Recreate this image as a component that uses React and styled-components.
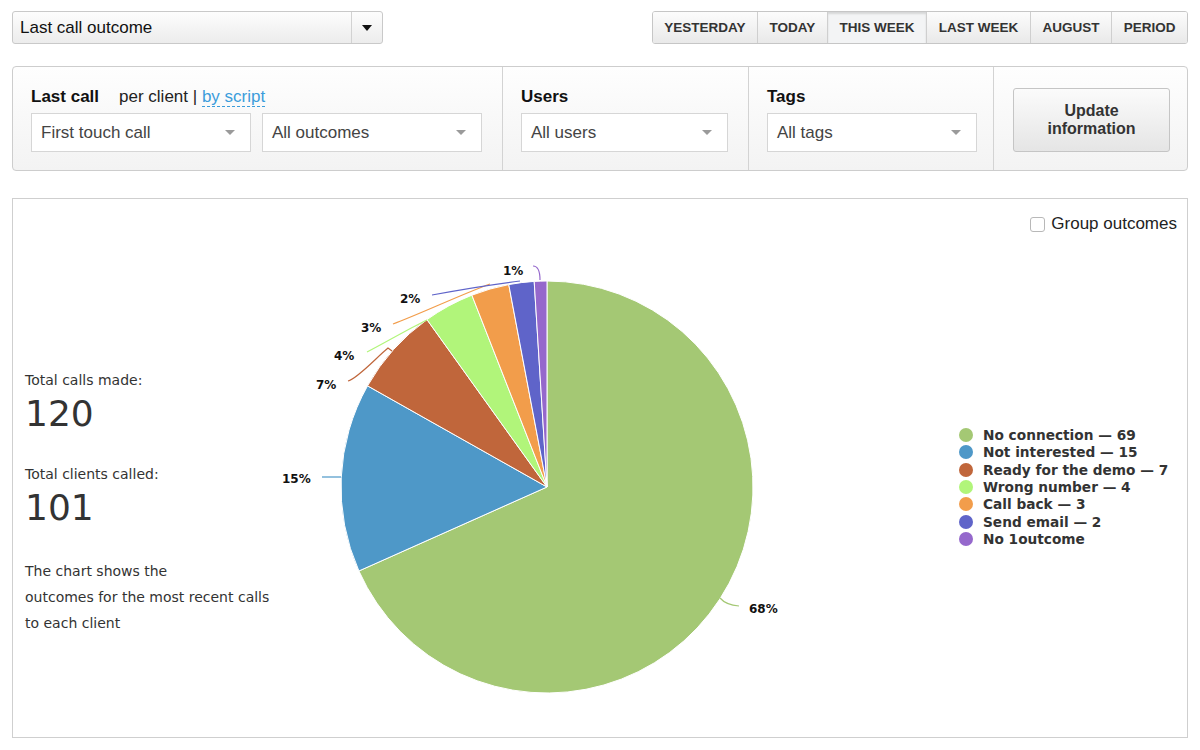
import React, { useState } from 'react'
import styled, { createGlobalStyle } from 'styled-components'

const GlobalStyle = createGlobalStyle`
  html, body {
    margin: 0;
    background: #fff;
  }
  body {
    font-family: "Liberation Sans", Arial, sans-serif;
    color: #222;
  }
  * {
    box-sizing: border-box;
  }
`

const periods = ['Yesterday', 'Today', 'This week', 'Last week', 'August', 'Period']

const outcomes = [
  { name: 'No connection', value: 69, color: '#a4c874' },
  { name: 'Not interested', value: 15, color: '#4e98c8' },
  { name: 'Ready for the demo', value: 7, color: '#c0663b' },
  { name: 'Wrong number', value: 4, color: '#b1f57a' },
  { name: 'Call back', value: 3, color: '#f29d4b' },
  { name: 'Send email', value: 2, color: '#5f64c9' },
  { name: 'No 1outcome', value: 1, color: '#9568cc' }
]

// label spots and connector lines, in page coordinates (viewBox matches the page)
const labels = [
  { text: '68%', x: 749, y: 613, line: 'M 720 598 Q 726 605 739 606' },
  { text: '15%', x: 282, y: 483, line: 'M 322 477 L 341 477' },
  { text: '7%', x: 316, y: 389, line: 'M 348 381 C 357 379 378 356 388 348 L 392 351' },
  { text: '4%', x: 334, y: 360, line: 'M 367 352 C 381 345 410 328 427 320' },
  { text: '3%', x: 361, y: 332, line: 'M 393 324 C 420 314 460 295 490 284' },
  { text: '2%', x: 400, y: 303, line: 'M 432 295 Q 480 286 520 281' },
  { text: '1%', x: 503, y: 275, line: 'M 533 266 Q 540 266 540 280' }
]

const CX = 547
const CY = 487
const R = 206

const point = (a) => [CX + R * Math.sin(a), CY - R * Math.cos(a)]

const slicePaths = () => {
  const total = outcomes.reduce((s, o) => s + o.value, 0)
  let start = 0
  return outcomes.map((o) => {
    const end = start + (o.value / total) * Math.PI * 2
    const [x1, y1] = point(start)
    const [x2, y2] = point(end)
    const large = end - start > Math.PI ? 1 : 0
    const d = `M ${CX} ${CY} L ${x1} ${y1} A ${R} ${R} 0 ${large} 1 ${x2} ${y2} Z`
    start = end
    return { d, color: o.color }
  })
}

const PieChart = () => (
  <ChartSvg viewBox="270 245 688 492" width="688" height="492">
    {slicePaths().map((s, i) => (
      <path key={i} d={s.d} fill={s.color} stroke="#fff" strokeWidth="1" strokeLinejoin="round" />
    ))}
    {labels.map((l, i) => (
      <g key={l.text}>
        <path d={l.line} fill="none" stroke={outcomes[i].color} strokeWidth="1.2" />
        <text x={l.x} y={l.y}>{l.text}</text>
      </g>
    ))}
  </ChartSvg>
)

const App = () => {
  const [period, setPeriod] = useState('This week')
  const [grouped, setGrouped] = useState(false)
  return (
    <Page>
      <GlobalStyle />
      <TopBar>
        <ReportSelect>
          <ReportLabel>Last call outcome</ReportLabel>
          <ReportArrow><BlackCaret /></ReportArrow>
        </ReportSelect>
        <PeriodGroup>
          {periods.map((p) => (
            <PeriodButton key={p} active={p === period} onClick={() => setPeriod(p)}>
              {p}
            </PeriodButton>
          ))}
        </PeriodGroup>
      </TopBar>

      <FilterPanel>
        <FilterSection w="490px">
          <FilterTitle>
            <b>Last call</b>
            <Switcher>per client | <ScriptLink>by script</ScriptLink></Switcher>
          </FilterTitle>
          <SelectRow>
            <FilterSelect w="220px">First touch call<Caret /></FilterSelect>
            <FilterSelect w="220px">All outcomes<Caret /></FilterSelect>
          </SelectRow>
        </FilterSection>
        <FilterSection w="246px">
          <FilterTitle><b>Users</b></FilterTitle>
          <SelectRow>
            <FilterSelect w="207px">All users<Caret /></FilterSelect>
          </SelectRow>
        </FilterSection>
        <FilterSection w="245px" pr="16px">
          <FilterTitle><b>Tags</b></FilterTitle>
          <SelectRow>
            <FilterSelect w="210px">All tags<Caret /></FilterSelect>
          </SelectRow>
        </FilterSection>
        <ButtonSection>
          <UpdateButton>Update<br />information</UpdateButton>
        </ButtonSection>
      </FilterPanel>

      <ChartPanel>
        <ChartHeader>
          <GroupToggle>
            <CheckBox type="checkbox" checked={grouped} onChange={() => setGrouped(!grouped)} />
            Group outcomes
          </GroupToggle>
        </ChartHeader>
        <ChartBody>
          <Stats>
            <StatLabel>Total calls made:</StatLabel>
            <StatValue>120</StatValue>
            <StatLabel gap>Total clients called:</StatLabel>
            <StatValue>101</StatValue>
            <Note>
              The chart shows the<br />
              outcomes for the most recent calls<br />
              to each client
            </Note>
          </Stats>
          <PieChart />
          <Legend>
            {outcomes.map((o) => (
              <LegendItem key={o.name}>
                <Dot color={o.color} />
                {o.name === 'No 1outcome' ? o.name : `${o.name} — ${o.value}`}
              </LegendItem>
            ))}
          </Legend>
        </ChartBody>
      </ChartPanel>
    </Page>
  )
}

const Page = styled.div`
  width: 1200px;
  padding: 11px 12px 0 12px;
`

const TopBar = styled.div`
  display: flex;
  justify-content: space-between;
  align-items: flex-start;
`

const ReportSelect = styled.div`
  width: 371px;
  height: 33px;
  display: flex;
  border: 1px solid #c9c9c9;
  border-radius: 3px;
  background: linear-gradient(#fdfdfd, #ececec);
`

const ReportLabel = styled.div`
  flex: 1;
  padding-left: 7px;
  font-size: 17px;
  line-height: 31px;
  color: #111;
`

const ReportArrow = styled.div`
  width: 31px;
  border-left: 1px solid #d2d2d2;
  display: flex;
  align-items: center;
  justify-content: center;
`

const BlackCaret = styled.span`
  width: 0;
  height: 0;
  border-left: 5.5px solid transparent;
  border-right: 5.5px solid transparent;
  border-top: 6px solid #111;
`

const PeriodGroup = styled.div`
  display: flex;
  height: 33px;
  border: 1px solid #c6c6c6;
  border-radius: 3px;
  overflow: hidden;
`

const PeriodButton = styled.button`
  height: 31px;
  padding: 0 11.6px;
  border: none;
  border-left: 1px solid #cfcfcf;
  background: ${(p) => (p.active ? '#f3f4f5' : 'linear-gradient(#fcfcfc, #e9e9e9)')};
  box-shadow: ${(p) => (p.active ? 'inset 0 2px 2px rgba(0,0,0,0.12)' : 'none')};
  font-family: "Liberation Sans", Arial, sans-serif;
  font-weight: bold;
  font-size: 13.5px;
  text-transform: uppercase;
  color: #333;
  cursor: pointer;
  &:first-child {
    border-left: none;
  }
`

const FilterPanel = styled.div`
  margin-top: 22px;
  height: 105px;
  display: flex;
  border: 1px solid #cdcdcd;
  border-radius: 4px;
  background: linear-gradient(#fefefe, #f3f3f3);
`

const FilterSection = styled.div`
  width: ${(p) => p.w};
  padding: 20px ${(p) => p.pr || '20px'} 0 18px;
  border-right: 1px solid #d3d3d3;
`

const FilterTitle = styled.div`
  font-size: 17px;
  line-height: 20px;
  color: #111;
  display: flex;
  gap: 20px;
`

const Switcher = styled.span`
  color: #222;
`

const ScriptLink = styled.a`
  color: #3b9ddb;
  border-bottom: 1px dashed #3b9ddb;
  cursor: pointer;
`

const SelectRow = styled.div`
  display: flex;
  gap: 11px;
  margin-top: 6px;
`

const FilterSelect = styled.div`
  width: ${(p) => p.w};
  height: 39px;
  display: flex;
  align-items: center;
  justify-content: space-between;
  padding: 0 15px 0 9px;
  background: #fff;
  border: 1px solid #d6d6d6;
  font-size: 17px;
  color: #444;
`

const Caret = styled.span`
  width: 0;
  height: 0;
  border-left: 5px solid transparent;
  border-right: 5px solid transparent;
  border-top: 5px solid #9a9a9a;
`

const ButtonSection = styled.div`
  flex: 1;
  padding: 21px 0 0 19px;
`

const UpdateButton = styled.button`
  width: 157px;
  height: 64px;
  border: 1px solid #c5c5c5;
  border-radius: 3px;
  background: linear-gradient(#fbfbfb, #e5e5e5);
  font-family: "Liberation Sans", Arial, sans-serif;
  font-weight: bold;
  font-size: 16px;
  line-height: 18px;
  color: #333;
  cursor: pointer;
`

const ChartPanel = styled.div`
  margin-top: 27px;
  height: 540px;
  border: 1px solid #cfcfcf;
  display: flex;
  flex-direction: column;
`

const ChartHeader = styled.div`
  height: 46px;
  padding: 16px 10px 0;
  display: flex;
  justify-content: flex-end;
`

const GroupToggle = styled.label`
  display: flex;
  align-items: center;
  gap: 6px;
  height: 18px;
  font-size: 17px;
  color: #222;
  cursor: pointer;
`

const CheckBox = styled.input`
  appearance: none;
  margin: 0;
  width: 15px;
  height: 15px;
  border: 1px solid #b8b8b8;
  border-radius: 3px;
  background: #fff;
  &:checked {
    background: #3b9ddb;
    border-color: #3b9ddb;
  }
`

const ChartBody = styled.div`
  height: 492px;
  display: flex;
`

const Stats = styled.div`
  width: 257px;
  padding: 125px 0 0 12px;
  font-family: "DejaVu Sans", Verdana, sans-serif;
  color: #333;
  white-space: nowrap;
`

const StatLabel = styled.div`
  font-size: 14px;
  line-height: 20px;
  margin-top: ${(p) => (p.gap ? '28px' : '0')};
`

const StatValue = styled.div`
  font-size: 36px;
  line-height: 44px;
  margin-top: 2px;
`

const Note = styled.div`
  margin-top: 28px;
  font-size: 14px;
  line-height: 26px;
`

const ChartSvg = styled.svg`
  display: block;
  flex-shrink: 0;
  overflow: visible;
  text {
    font-family: "DejaVu Sans", Verdana, sans-serif;
    font-weight: bold;
    font-size: 12px;
    fill: #111;
  }
`

const Legend = styled.div`
  flex: 1;
  display: flex;
  flex-direction: column;
  justify-content: center;
  padding: 0 0 8px 1px;
`

const LegendItem = styled.div`
  display: flex;
  align-items: center;
  gap: 10px;
  height: 17.4px;
  font-family: "DejaVu Sans", Verdana, sans-serif;
  font-weight: bold;
  font-size: 13.7px;
  color: #333;
  white-space: nowrap;
`

const Dot = styled.span`
  width: 14px;
  height: 14px;
  border-radius: 50%;
  background: ${(p) => p.color};
  flex-shrink: 0;
`

export default App
